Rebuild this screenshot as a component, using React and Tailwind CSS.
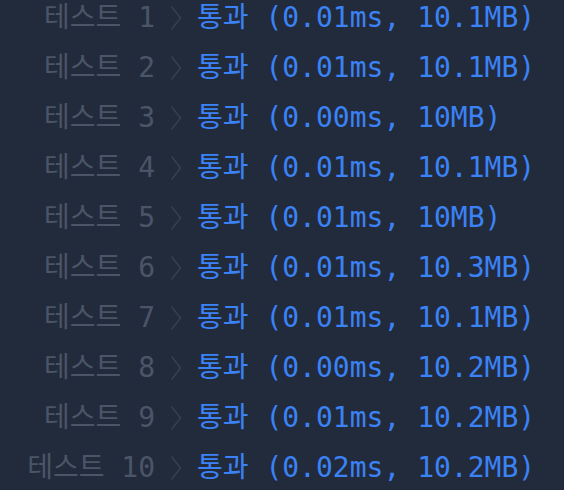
import React from "react";

const rows = [
  ["1", "0.01ms", "10.1MB"],
  ["2", "0.01ms", "10.1MB"],
  ["3", "0.00ms", "10MB"],
  ["4", "0.01ms", "10.1MB"],
  ["5", "0.01ms", "10MB"],
  ["6", "0.01ms", "10.3MB"],
  ["7", "0.01ms", "10.1MB"],
  ["8", "0.00ms", "10.2MB"],
  ["9", "0.01ms", "10.2MB"],
  ["10", "0.02ms", "10.2MB"],
];

const Chevron = () => (
  <svg width="12" height="26" viewBox="0 0 12 26" fill="none" className="text-[#364050]">
    <polyline points="1.5,1.5 10.5,13 1.5,24.5" stroke="currentColor" strokeWidth="1.5" strokeLinejoin="round" />
  </svg>
);

export default function App() {
  return (
    <div className="w-[564px] h-[490px] overflow-hidden bg-[#222b3b] font-['DejaVu_Sans_Mono','Noto_Sans_CJK_KR',monospace] text-[28px]">
      <div className="-mt-[7px] flex flex-col">
        {rows.map(([n, ms, mb]) => (
          <div key={n} className="flex items-center h-[50px] whitespace-pre">
            <span className="w-[155px] text-right text-[#4a5568]">테스트 {n}</span>
            <span className="w-[42px] flex justify-center">
              <Chevron />
            </span>
            <span className="text-[#3b82f6]">통과 ({ms}, {mb})</span>
          </div>
        ))}
      </div>
    </div>
  );
}
